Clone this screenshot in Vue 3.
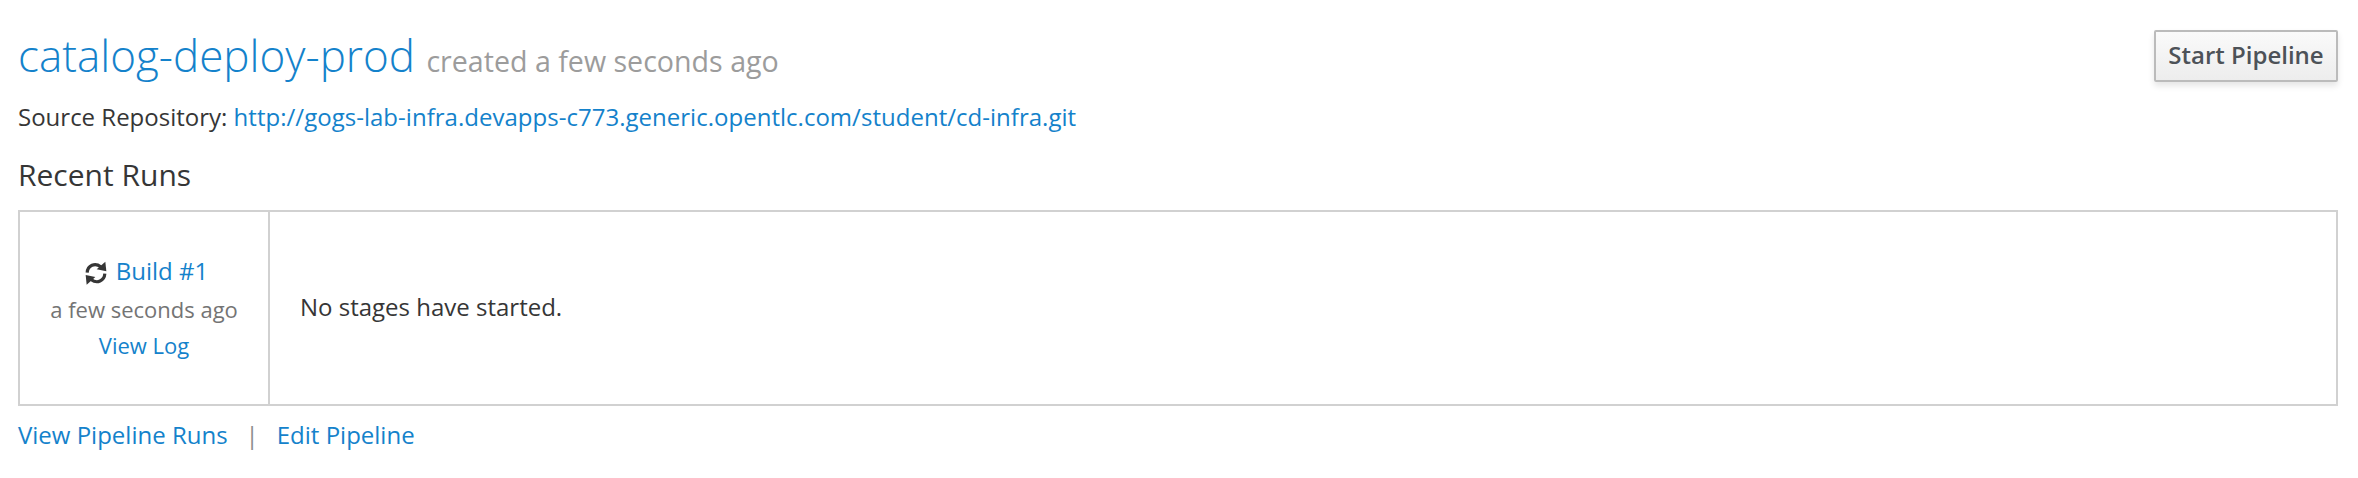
<script setup>
const pipeline = {
  name: 'catalog-deploy-prod',
  created: 'created a few seconds ago',
  repo: 'http://gogs-lab-infra.devapps-c773.generic.opentlc.com/student/cd-infra.git',
}
</script>

<template>
  <main class="page">
    <header class="header">
      <h1 class="title"><a>{{ pipeline.name }}</a> <small>{{ pipeline.created }}</small></h1>
      <button class="start">Start Pipeline</button>
    </header>
    <p class="source">Source Repository: <a>{{ pipeline.repo }}</a></p>
    <h2 class="heading">Recent Runs</h2>
    <section class="run">
      <div class="summary">
        <div class="build">
          <svg class="icon" viewBox="30 30 66 72" aria-hidden="true">
            <g id="arrow">
              <path d="M36.5 65C38 43 60 34 77 47" fill="none" stroke="#363636" stroke-width="9.5" />
              <path d="M91 32L94 61L65 55Z" fill="#363636" />
            </g>
            <use href="#arrow" transform="rotate(180 63 66.5)" />
          </svg>
          <a>Build #1</a>
        </div>
        <div class="when">a few seconds ago</div>
        <div class="log"><a>View Log</a></div>
      </div>
      <div class="stages">No stages have started.</div>
    </section>
    <footer class="links">
      <a>View Pipeline Runs</a>
      <span class="bar">|</span>
      <a>Edit Pipeline</a>
    </footer>
  </main>
</template>

<style>
body {
  background: #fff;
}
</style>

<style scoped>
.page {
  box-sizing: border-box;
  height: 478px;
  padding: 30px 20px 0 18px;
  font: 24px/40px "Open Sans", "Noto Sans", sans-serif;
  color: #363636;
}
a {
  color: #1482cb;
}
.header {
  display: flex;
  justify-content: space-between;
  align-items: flex-start;
  height: 49px;
}
.title {
  margin: 1px 0 0;
  font-size: 44px;
  font-weight: 300;
  line-height: 48px;
  white-space: nowrap;
}
.title small {
  font-size: 28.6px;
  font-weight: 400;
  line-height: 1;
  color: #9c9c9c;
}
.start {
  box-sizing: border-box;
  width: 184px;
  height: 52px;
  padding: 0 0 3px;
  border: 2px solid #bbb;
  border-radius: 2px;
  background: linear-gradient(#fafafa, #ededed);
  box-shadow: 0 4px 6px rgba(3, 3, 3, 0.1);
  font: 600 24px/40px "Open Sans", "Noto Sans", sans-serif;
  color: #4d5258;
  white-space: nowrap;
}
.source {
  margin: 18px 0 0;
}
.source a {
  letter-spacing: 0.02px;
}
.heading {
  margin: 21px 0 18px;
  font-size: 30px;
  font-weight: 400;
  line-height: 34px;
}
.run {
  box-sizing: border-box;
  display: flex;
  height: 196px;
  border: 2px solid #d1d1d1;
}
.summary {
  box-sizing: border-box;
  width: 250px;
  padding-top: 39px;
  border-right: 2px solid #d1d1d1;
  text-align: center;
}
.build {
  display: flex;
  justify-content: center;
  align-items: center;
  gap: 9px;
  padding-left: 5px;
}
.icon {
  width: 22px;
  height: 24px;
  margin-top: 3px;
}
.when,
.log {
  font-size: 22px;
  line-height: 36px;
}
.when {
  color: #747474;
}
.stages {
  padding: 75px 0 0 30px;
}
.links {
  display: flex;
  margin-top: 9px;
}
.bar {
  margin: 0 18px;
  color: #8c8c8c;
}
</style>
